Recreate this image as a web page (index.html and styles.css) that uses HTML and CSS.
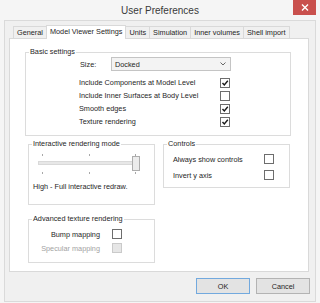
FILE: index.html
```html
<!DOCTYPE html>
<html lang="en">
<head>
    <meta charset="UTF-8">
    <title>User Preferences</title>
    <link rel="stylesheet" href="styles.css">
</head>
<body>
    <div class="window">
        <div class="titlebar">
            <span></span>
            <div class="title">User Preferences</div>
            <button class="close">
                <svg width="8" height="7" viewBox="0 0 8 7"><path d="M1 0.5 L7 6.5 M7 0.5 L1 6.5" stroke="#fff" stroke-width="1.4" fill="none"/></svg>
            </button>
        </div>

        <div class="client">
            <!-- tab strip -->
            <div class="tabs">
                <div class="tab">General</div>
                <div class="tab active">Model Viewer Settings</div>
                <div class="tab">Units</div>
                <div class="tab">Simulation</div>
                <div class="tab">Inner volumes</div>
                <div class="tab">Shell import</div>
            </div>

            <div class="panel">
                <fieldset class="group basic">
                    <legend>Basic settings</legend>
                    <div class="size-row">
                        <span class="size-label">Size:</span>
                        <div class="select">
                            <span>Docked</span>
                            <svg width="6" height="4" viewBox="0 0 6 4"><path d="M0.5 0.5 L3 3 L5.5 0.5" stroke="#666" stroke-width="1" fill="none"/></svg>
                        </div>
                    </div>
                    <div class="check-row">
                        <span>Include Components at Model Level</span>
                        <span class="check"><svg width="8" height="8" viewBox="0 0 8 8"><path d="M1.5 4 L3.3 6 L6.8 1.8" stroke="#1a1a1a" stroke-width="1.4" fill="none"/></svg></span>
                    </div>
                    <div class="check-row">
                        <span>Include Inner Surfaces at Body Level</span>
                        <span class="check"></span>
                    </div>
                    <div class="check-row">
                        <span>Smooth edges</span>
                        <span class="check"><svg width="8" height="8" viewBox="0 0 8 8"><path d="M1.5 4 L3.3 6 L6.8 1.8" stroke="#1a1a1a" stroke-width="1.4" fill="none"/></svg></span>
                    </div>
                    <div class="check-row">
                        <span>Texture rendering</span>
                        <span class="check"><svg width="8" height="8" viewBox="0 0 8 8"><path d="M1.5 4 L3.3 6 L6.8 1.8" stroke="#1a1a1a" stroke-width="1.4" fill="none"/></svg></span>
                    </div>
                </fieldset>

                <div class="lower">
                    <div class="col">
                        <fieldset class="group interactive">
                            <legend>Interactive rendering mode</legend>
                            <svg class="slider" width="102" height="25" viewBox="0 0 102 25">
                                <path d="M4.5 3 V5 M51.5 3 V5 M97.5 3 V5 M4.5 21 V23 M51.5 21 V23 M97.5 21 V23" stroke="#a8a8a8" stroke-width="1"/>
                                <rect x="0.5" y="10.5" width="99" height="3" fill="#e7e7e7" stroke="#d9d9d9"/>
                                <rect x="94.5" y="5.5" width="7" height="14" fill="#ececec" stroke="#adadad"/>
                            </svg>
                            <div class="mode-text">High - Full interactive redraw.</div>
                        </fieldset>

                        <fieldset class="group advanced">
                            <legend>Advanced texture rendering</legend>
                            <div class="adv-row">
                                <span>Bump mapping</span>
                                <span class="check"></span>
                            </div>
                            <div class="adv-row disabled">
                                <span>Specular mapping</span>
                                <span class="check"></span>
                            </div>
                        </fieldset>
                    </div>

                    <fieldset class="group controls">
                        <legend>Controls</legend>
                        <div class="ctl-row">
                            <span>Always show controls</span>
                            <span class="check"></span>
                        </div>
                        <div class="ctl-row">
                            <span>Invert y axis</span>
                            <span class="check"></span>
                        </div>
                    </fieldset>
                </div>
            </div>

            <div class="buttons">
                <button class="btn default">OK</button>
                <button class="btn">Cancel</button>
            </div>
        </div>
    </div>
</body>
</html>
```

FILE: styles.css
```css
* {
    box-sizing: border-box;
}
body {
    margin: 0;
    font-family: "Liberation Sans", Arial, sans-serif;
    font-size: 7.3px;
    color: #262626;
    background-color: #f5f5f5;
}
.window {
    width: 320px;
    height: 303px;
}
.titlebar {
    height: 20px;
    display: grid;
    grid-template-columns: 1fr auto 1fr;
    align-items: start;
}
.title {
    font-size: 10px;
    line-height: 10px;
    padding-top: 6px;
    color: #3a3a3a;
}
.close {
    justify-self: end;
    width: 23px;
    height: 15px;
    margin-right: 4px;
    padding: 0;
    border: none;
    background-color: #c9504d;
    display: flex;
    align-items: center;
    justify-content: center;
}
.client {
    margin: 0 4px;
    height: 282px;
    border: 1px solid #dadada;
    background-color: #f0f0f0;
    padding: 4px 6px 0 4px;
}
.tabs {
    display: flex;
    align-items: flex-end;
    height: 13px;
    padding-left: 5px;
}
.tab {
    height: 12px;
    line-height: 11px;
    padding: 0 3px;
    margin-left: -1px;
    border: 1px solid #d9d9d9;
    border-bottom: none;
    background-color: #f0f0f0;
    white-space: nowrap;
}
.tab.active {
    position: relative;
    z-index: 1;
    height: 14px;
    margin-bottom: -1px;
    background-color: #fff;
}
.panel {
    height: 234px;
    border: 1px solid #d9d9d9;
    background-color: #fff;
    padding: 8px 0 0 15px;
}
.group {
    margin: 0;
    padding: 0;
    min-width: 0;
    border: 1px solid #dcdcdc;
}
.group legend {
    padding: 0 1px;
    margin-left: 3px;
    line-height: 10px;
}
.basic {
    width: 266px;
    padding-bottom: 7px;
}
.size-row {
    display: flex;
    align-items: center;
    margin-left: 54px;
    margin-bottom: 5px;
}
.size-label {
    width: 31px;
}
.select {
    width: 120px;
    height: 14px;
    border: 1px solid #c4c4c4;
    background-color: #f3f3f3;
    display: flex;
    align-items: center;
    justify-content: space-between;
    padding: 0 4px 0 3px;
}
.check-row {
    display: grid;
    grid-template-columns: 141px 10px;
    align-items: center;
    height: 13px;
    margin-left: 53px;
}
.check {
    width: 10px;
    height: 10px;
    border: 1px solid #6d6d6d;
    background-color: #fff;
    display: flex;
    align-items: center;
    justify-content: center;
}
.lower {
    display: flex;
    gap: 8px;
    margin: 3px 0 0 3px;
}
.col {
    width: 127px;
}
.interactive {
    padding-bottom: 12px;
}
.slider {
    display: block;
    margin: 2px 0 0 9px;
}
.mode-text {
    margin: 6px 0 0 4px;
    line-height: 10px;
}
.advanced {
    margin-top: 9px;
    padding: 3px 0 7px 0;
}
.adv-row {
    display: grid;
    grid-template-columns: 71px 10px;
    column-gap: 12px;
    align-items: center;
    height: 14px;
}
.adv-row span:first-child {
    text-align: right;
}
.adv-row.disabled {
    color: #a3a3a3;
}
.adv-row.disabled .check {
    border-color: #cacaca;
    background-color: #e6e6e6;
}
.controls {
    width: 127px;
    align-self: flex-start;
    padding: 2px 0 4px 0;
}
.ctl-row {
    display: grid;
    grid-template-columns: 91px 10px;
    align-items: center;
    height: 16px;
    margin-left: 9px;
}
.buttons {
    display: flex;
    justify-content: flex-end;
    gap: 6px;
    margin: 6px -1px 0 0;
}
.btn {
    width: 54px;
    height: 16px;
    padding: 0;
    font-family: "Liberation Sans", Arial, sans-serif;
    font-size: 7.3px;
    color: #262626;
    border: 1px solid #b3b3b3;
    background-color: #e3e3e3;
}
.btn.default {
    border-color: #72a9de;
}
```
